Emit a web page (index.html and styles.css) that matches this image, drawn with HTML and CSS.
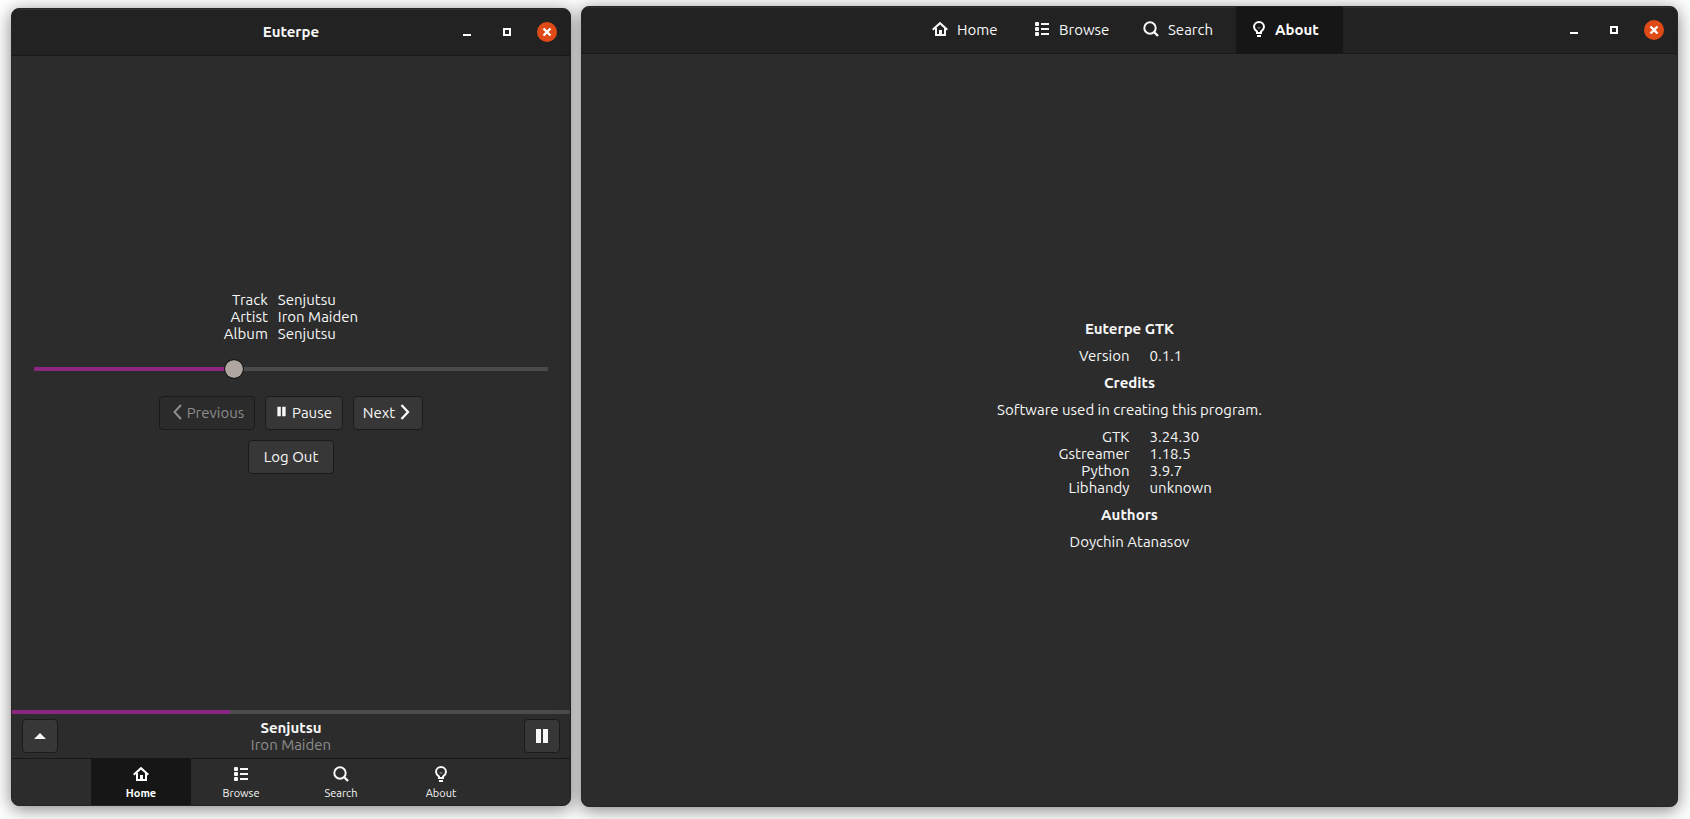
FILE: index.html
```html
<!DOCTYPE html>
<html lang="en">
<head>
<meta charset="utf-8">
<title>Euterpe</title>
<link rel="stylesheet" href="styles.css">
</head>
<body>
<svg class="sprite" aria-hidden="true">
  <symbol id="i-home" viewBox="0 0 16 16"><path d="M.7 8.700 8 2.200l7.300 6.500M4 7v7h9V7" fill="none" stroke="currentColor" stroke-width="2"/><path d="M7 9h3v5H7z" fill="currentColor"/></symbol>
  <symbol id="i-list" viewBox="0 0 16 16"><g fill="currentColor"><rect x="1" y="1" width="4" height="4" rx="1"/><rect x="1" y="6" width="4" height="4" rx="1"/><rect x="1" y="11" width="4" height="4" rx="1"/><path d="M7 2h8v2H7zM7 7h8v2H7zM7 12h8v2H7z"/></g></symbol>
  <symbol id="i-search" viewBox="0 0 16 16"><circle cx="7" cy="7" r="5.700" fill="none" stroke="currentColor" stroke-width="2"/><path d="m11 11 4 4" stroke="currentColor" stroke-width="2.400"/></symbol>
  <symbol id="i-bulb" viewBox="0 0 16 16"><path d="M6 12v-1.500C4.500 9.300 3 8 3 6a5 5 0 0 1 10 0c0 2-1.500 3.300-3 4.500V12z" fill="none" stroke="currentColor" stroke-width="2"/><path d="M6 14h4v2H6z" fill="currentColor"/><path d="M6 6h4L8 8.500z" fill="currentColor" opacity=".35"/></symbol>
  <symbol id="i-close" viewBox="0 0 20 20"><path d="m6.500 6.500 7 7m0-7-7 7" stroke="currentColor" stroke-width="2.400"/></symbol>
  <symbol id="i-min" viewBox="0 0 20 20"><path d="M6 12h8v2H6z" fill="currentColor"/></symbol>
  <symbol id="i-max" viewBox="0 0 20 20"><path d="M7 7h6v6H7z" fill="none" stroke="currentColor" stroke-width="2"/></symbol>
  <symbol id="i-prev" viewBox="0 0 16 16"><path d="m11 1-6.500 7 6.500 7" fill="none" stroke="currentColor" stroke-width="2"/></symbol>
  <symbol id="i-next" viewBox="0 0 16 16"><path d="m4.500 1 6.500 7-6.500 7" fill="none" stroke="currentColor" stroke-width="2.300"/></symbol>
  <symbol id="i-pause" viewBox="0 0 16 16"><path d="M2 1h5v14H2zM9 1h5v14H9z" fill="currentColor"/></symbol>
  <symbol id="i-up" viewBox="0 0 16 16"><path d="m2 11 6-6 6 6z" fill="currentColor"/></symbol>
</svg>

<section class="window player" aria-label="Player window">
  <header class="titlebar">
    <h1 class="title">Euterpe</h1>
    <div class="controls">
      <button class="control" aria-label="Minimize"><svg><use href="#i-min"/></svg></button>
      <button class="control" aria-label="Maximize"><svg><use href="#i-max"/></svg></button>
      <button class="control close" aria-label="Close"><svg><use href="#i-close"/></svg></button>
    </div>
  </header>
  <main class="now-playing">
    <table class="facts track">
      <tr><th scope="row">Track</th><td>Senjutsu</td></tr>
      <tr><th scope="row">Artist</th><td>Iron Maiden</td></tr>
      <tr><th scope="row">Album</th><td>Senjutsu</td></tr>
    </table>
    <input class="seek" type="range" min="0" max="1000" value="385" aria-label="Track position">
    <div class="buttons">
      <button class="btn previous" disabled><svg class="icon"><use href="#i-prev"/></svg>Previous</button>
      <button class="btn pause"><svg class="icon small"><use href="#i-pause"/></svg>Pause</button>
      <button class="btn next">Next<svg class="icon"><use href="#i-next"/></svg></button>
    </div>
    <button class="btn logout">Log Out</button>
  </main>
  <div class="progress"><div class="progress-fill" style="width:39%"></div></div>
  <div class="mini">
    <button class="btn square" aria-label="Expand player"><svg class="icon"><use href="#i-up"/></svg></button>
    <div class="mini-text"><strong>Senjutsu</strong><span class="dim">Iron Maiden</span></div>
    <button class="btn square" aria-label="Pause"><svg class="icon"><use href="#i-pause"/></svg></button>
  </div>
  <nav class="bottom-tabs" aria-label="Views">
    <button class="tab active"><svg class="icon"><use href="#i-home"/></svg>Home</button>
    <button class="tab"><svg class="icon"><use href="#i-list"/></svg>Browse</button>
    <button class="tab"><svg class="icon"><use href="#i-search"/></svg>Search</button>
    <button class="tab"><svg class="icon"><use href="#i-bulb"/></svg>About</button>
  </nav>
</section>

<section class="window about" aria-label="About window">
  <header class="titlebar">
    <nav class="top-tabs" aria-label="Views">
      <button class="tab"><svg class="icon"><use href="#i-home"/></svg>Home</button>
      <button class="tab"><svg class="icon"><use href="#i-list"/></svg>Browse</button>
      <button class="tab"><svg class="icon"><use href="#i-search"/></svg>Search</button>
      <button class="tab active"><svg class="icon"><use href="#i-bulb"/></svg>About</button>
    </nav>
    <div class="controls">
      <button class="control" aria-label="Minimize"><svg><use href="#i-min"/></svg></button>
      <button class="control" aria-label="Maximize"><svg><use href="#i-max"/></svg></button>
      <button class="control close" aria-label="Close"><svg><use href="#i-close"/></svg></button>
    </div>
  </header>
  <main class="credits">
    <h2>Euterpe GTK</h2>
    <table class="facts versions">
      <tr><th scope="row">Version</th><td>0.1.1</td></tr>
    </table>
    <h2>Credits</h2>
    <p>Software used in creating this program.</p>
    <table class="facts versions">
      <tr><th scope="row">GTK</th><td>3.24.30</td></tr>
      <tr><th scope="row">Gstreamer</th><td>1.18.5</td></tr>
      <tr><th scope="row">Python</th><td>3.9.7</td></tr>
      <tr><th scope="row">Libhandy</th><td>unknown</td></tr>
    </table>
    <h2>Authors</h2>
    <p>Doychin Atanasov</p>
  </main>
</section>
</body>
</html>
```
FILE: styles.css
```css
* { box-sizing: border-box; }

body {
  display: flex;
  gap: 10px;
  min-height: 100vh;
  margin: 0;
  padding: 6px 12px 12px 11px;
  background: #fff;
  color: #f7f7f7;
  font: 15px/17px Ubuntu, "Noto Sans", "Open Sans", sans-serif;
}

h1, h2, p { margin: 0; font-size: 15px; line-height: 17px; }
h1, h2 { font-weight: bold; }
button { font: inherit; color: inherit; padding: 0; border: 0; background: none; white-space: nowrap; }
svg { display: block; }

.sprite { position: absolute; width: 0; height: 0; }
.icon { width: 16px; height: 16px; flex: none; }
.icon.small { width: 11px; height: 11px; margin-bottom: 2px; }

.window {
  display: flex;
  flex-direction: column;
  min-width: 0;
  border: 1px solid #252525;
  border-radius: 8px;
  background: #2c2c2c;
  box-shadow: 0 3px 18px rgba(0, 0, 0, .5);
  overflow: hidden;
}
.player { flex: 558 1 0; margin: 2px 0 1px; }
.about { flex: 1095 1 0; }

.titlebar {
  display: grid;
  grid-template-columns: 1fr auto 1fr;
  align-items: center;
  height: 47px;
  border-bottom: 1px solid #181818;
  background: #222;
  box-shadow: inset 0 1px #303030;
}
.title, .top-tabs { grid-column: 2; }
.title { padding-bottom: 2px; }
.controls { grid-column: 3; display: flex; justify-content: flex-end; gap: 20px; padding-right: 13px; }
.control { width: 20px; height: 20px; border-radius: 50%; color: #fff; }
.control svg { width: 20px; height: 20px; }
.close { background: #e04a16; }

.tab { display: flex; align-items: center; }
.tab.active { background: #161616; color: #fff; font-weight: bold; }
.top-tabs { display: grid; grid-template-columns: 102px 109px 109px 107px; height: 46px; }
.top-tabs .tab { gap: 9px; padding: 0 0 2px 16px; }
.top-tabs .tab.active { gap: 8px; padding-left: 15px; }

.now-playing, .credits {
  flex: 1;
  display: flex;
  flex-direction: column;
  justify-content: center;
  align-items: center;
}
.now-playing { padding: 0 22px 1px; }

.facts { border-collapse: collapse; }
.facts th, .facts td { padding: 0; font-weight: normal; }
.facts th { text-align: right; }
.facts td { text-align: left; padding-left: 10px; }

.seek {
  appearance: none;
  width: 100%;
  height: 20px;
  margin: 17px 0;
  border-radius: 2px;
  background: linear-gradient(90deg, #8c2683 39%, #4b4b4b 39%) center / 100% 4px no-repeat;
}
.seek::-webkit-slider-thumb {
  appearance: none;
  width: 20px;
  height: 20px;
  border: 1px solid #171717;
  border-radius: 50%;
  background: #aea69f padding-box;
}

.buttons { display: flex; gap: 10px; margin-bottom: 10px; }
.btn {
  display: flex;
  align-items: center;
  justify-content: center;
  height: 34px;
  padding-bottom: 2px;
  border: 1px solid #1a1a1a;
  border-radius: 4px;
  background: #373737;
}
.btn:disabled { background: #2b2b2b; color: #8c8c8c; }
.previous { width: 96px; gap: 1px; }
.pause { width: 78px; gap: 5px; }
.next { width: 70px; gap: 2px; }
.logout { width: 86px; }
.square { width: 36px; padding-bottom: 0; }

.progress { height: 4px; background: #4b4b4b; }
.progress-fill { height: 100%; background: #8c2683; }

.mini { display: flex; align-items: center; justify-content: space-between; height: 44px; padding: 0 10px; }
.mini-text { display: flex; flex-direction: column; align-items: center; padding-bottom: 1px; }
.dim { color: #8c8c8c; }

.bottom-tabs {
  display: grid;
  grid-template-columns: repeat(4, 100px);
  justify-content: center;
  height: 47px;
  border-top: 1px solid #181818;
}
.bottom-tabs .tab { flex-direction: column; justify-content: center; gap: 4px; padding-top: 2px; font-size: 11px; line-height: 15px; }

.credits { gap: 10px; padding-top: 10px; }
.versions { display: grid; width: 100%; }
.versions tbody, .versions tr { display: grid; }
.versions tr { grid-template-columns: 1fr 1fr; }
.versions td { padding-left: 20px; }
```
